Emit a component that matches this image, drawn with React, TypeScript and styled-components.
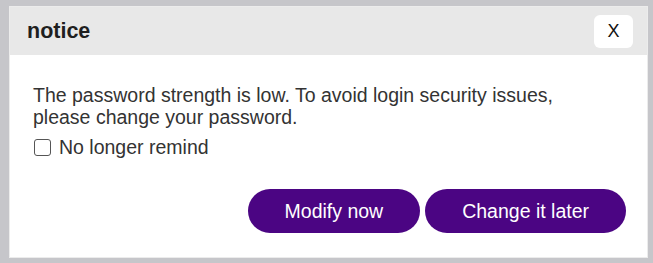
import React, { useState } from 'react';
import styled, { createGlobalStyle } from 'styled-components';

const GlobalStyle = createGlobalStyle`
  html, body {
    margin: 0;
    padding: 0;
    background: #c6c6ca;
  }
  body {
    font-family: "Liberation Sans", Arial, sans-serif;
  }
`;

const Page = styled.div`
  width: 653px;
  height: 263px;
  box-sizing: border-box;
  padding: 6px 5px 5px 9px;
`;

const Dialog = styled.div`
  height: 100%;
  box-sizing: border-box;
  border: 1px solid #ececec;
  background: #ffffff;
  display: flex;
  flex-direction: column;
`;

const Header = styled.div`
  height: 48px;
  flex-shrink: 0;
  background: #e8e8e8;
  display: flex;
  align-items: center;
  justify-content: space-between;
  padding: 0 14px 0 17px;
`;

const Title = styled.h2`
  margin: 0;
  font-size: 21.5px;
  font-weight: bold;
  color: #1f1f1f;
`;

const CloseButton = styled.button`
  width: 39px;
  height: 33px;
  border: none;
  border-radius: 6px;
  background: #ffffff;
  color: #111;
  font-family: "Liberation Sans", Arial, sans-serif;
  font-size: 18px;
  padding: 0;
  cursor: pointer;
`;

const Body = styled.div`
  flex: 1;
  display: flex;
  flex-direction: column;
  padding: 29px 21px 24px 23px;
`;

const Message = styled.p`
  margin: 0;
  font-size: 19.5px;
  line-height: 22px;
  color: #333;
`;

const CheckRow = styled.label`
  display: flex;
  align-items: center;
  gap: 8px;
  margin-top: 8px;
  font-size: 19.5px;
  line-height: 22px;
  color: #333;
  cursor: pointer;
`;

const Box = styled.input`
  appearance: none;
  margin: 0 0 0 1px;
  width: 17px;
  height: 17px;
  box-sizing: border-box;
  border: 1.5px solid #555;
  border-radius: 3px;
  background: #fff;

  &:checked {
    background: #4b0583;
    border-color: #4b0583;
  }
`;

const Actions = styled.div`
  margin-top: auto;
  display: flex;
  justify-content: flex-end;
  gap: 5px;
`;

const PillButton = styled.button`
  height: 44px;
  padding: 0 37px;
  border: none;
  border-radius: 22px;
  background: #4b0583;
  color: #ffffff;
  font-family: "Liberation Sans", Arial, sans-serif;
  font-size: 19.5px;
  cursor: pointer;
`;

export default function App() {
  const [remind, setRemind] = useState(false);

  return (
    <>
      <GlobalStyle />
      <Page>
        <Dialog>
          <Header>
            <Title>notice</Title>
            <CloseButton>X</CloseButton>
          </Header>
          <Body>
            <Message>
              The password strength is low. To avoid login security issues,
              <br />
              please change your password.
            </Message>
            <CheckRow>
              <Box
                type="checkbox"
                checked={remind}
                onChange={(e) => setRemind(e.target.checked)}
              />
              No longer remind
            </CheckRow>
            <Actions>
              <PillButton>Modify now</PillButton>
              <PillButton>Change it later</PillButton>
            </Actions>
          </Body>
        </Dialog>
      </Page>
    </>
  );
}
